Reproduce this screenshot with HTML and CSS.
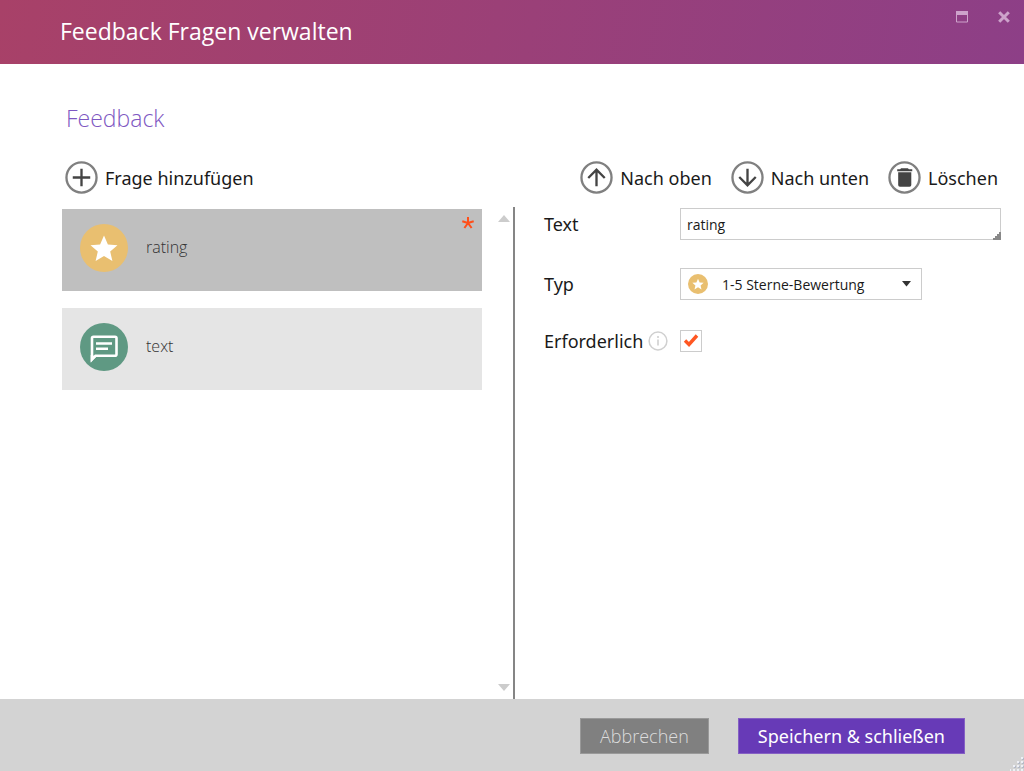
FILE: index.html
```html
<!DOCTYPE html>
<html lang="de">
<head>
<meta charset="utf-8">
<meta name="viewport" content="width=device-width, initial-scale=1">
<title>Feedback Fragen verwalten</title>
<link rel="stylesheet" href="styles.css">
</head>
<body>
<svg class="symbols" aria-hidden="true">
  <symbol id="star" viewBox="0 0 48 48">
    <circle cx="24" cy="24" r="24" fill="#e9bf70"/>
    <path fill="#fff" d="M24 11.5l3.900 8.900 9.600.8-7.300 6.400 2.200 9.400-8.400-5-8.400 5 2.200-9.400-7.300-6.400 9.600-.8z"/>
  </symbol>
</svg>
<header class="titlebar">
  <h1 class="title">Feedback Fragen verwalten</h1>
  <div class="window-controls">
    <button class="window-button" type="button" aria-label="Maximieren">
      <svg width="12" height="12" viewBox="0 0 12 12"><path d="M.5 .5h11v10.500h-11z" fill="none" stroke="currentColor"/><path d="M0 0h12v4H0z" fill="currentColor"/></svg>
    </button>
    <button class="window-button" type="button" aria-label="Schließen">
      <svg width="12" height="12" viewBox="0 0 12 12"><path d="M1.200 1.200l9.600 9.600M10.800 1.200l-9.600 9.600" stroke="currentColor" stroke-width="3"/></svg>
    </button>
  </div>
</header>
<main class="content">
  <h2 class="section-title">Feedback</h2>
  <div class="toolbar">
    <button class="tool" type="button">
      <svg class="tool-icon" viewBox="0 0 34 34"><circle class="ring" cx="17" cy="17" r="15.500"/><path class="stroke" d="M17 8v18M8 17h18"/></svg>
      Frage hinzufügen
    </button>
    <div class="tool-group">
      <button class="tool" type="button">
        <svg class="tool-icon" viewBox="0 0 34 34"><circle class="ring" cx="17" cy="17" r="15.500"/><path class="stroke" d="M17 26V9.500M8.500 17.500L17 9l8.500 8.500"/></svg>
        Nach oben
      </button>
      <button class="tool" type="button">
        <svg class="tool-icon" viewBox="0 0 34 34"><circle class="ring" cx="17" cy="17" r="15.500"/><path class="stroke" d="M17 8v16.500M8.500 16.500L17 25l8.500-8.500"/></svg>
        Nach unten
      </button>
      <button class="tool" type="button">
        <svg class="tool-icon" viewBox="0 0 34 34"><circle class="ring" cx="17" cy="17" r="15.500"/><path fill="#444" d="M13.500 7.500h7l1 1H25v2H9.500v-2h3zM10.500 11.500h13.500v13.200a1.800 1.800 0 0 1-1.800 1.800h-9.900a1.800 1.800 0 0 1-1.800-1.800z"/></svg>
        Löschen
      </button>
    </div>
  </div>
  <div class="split">
    <section class="list-pane">
      <ul class="questions">
        <li class="question question-selected">
          <svg class="question-icon"><use href="#star"/></svg>
          <span class="question-name">rating</span>
          <svg class="required" viewBox="0 0 14 14"><path d="M7 7V1M7 7l5.700-1.800M7 7l3.600 5M7 7l-3.600 5M7 7L1.300 5.200" stroke="#ff4f1a" stroke-width="2"/></svg>
        </li>
        <li class="question">
          <svg class="question-icon" viewBox="0 0 48 48"><circle cx="24" cy="24" r="24" fill="#5f9983"/><path fill="none" stroke="#fff" stroke-width="2.600" d="M12 36.500V15.200a1.500 1.500 0 0 1 1.500-1.500h21.500a1.500 1.500 0 0 1 1.500 1.500v16a1.500 1.500 0 0 1-1.500 1.500H15.500z"/><path fill="#fff" d="M10.700 39v-7l6 1.500z"/><path stroke="#fff" stroke-width="2.400" d="M16 20.500h16M16 25.800h12"/></svg>
          <span class="question-name">text</span>
        </li>
      </ul>
      <div class="scroller">
        <svg width="12" height="7" viewBox="0 0 12 7"><path d="M6 0l6 7H0z" fill="#ccc"/></svg>
        <svg width="12" height="7" viewBox="0 0 12 7"><path d="M0 0h12L6 7z" fill="#ccc"/></svg>
      </div>
    </section>
    <form class="details">
      <label class="label" for="text">Text</label>
      <div class="text-wrap">
        <input class="text-input" id="text" type="text" value="rating">
        <svg class="grip" viewBox="0 0 8 8"><path d="M8 0v8H0V6h2V4h2V2h2V0z" fill="#888"/></svg>
      </div>
      <label class="label" for="type">Typ</label>
      <div class="select-wrap">
        <select class="select" id="type"><option>1-5 Sterne-Bewertung</option></select>
        <svg class="select-icon"><use href="#star"/></svg>
        <svg class="caret" viewBox="0 0 9 6"><path d="M0 0h9L4.500 5.500z" fill="#333"/></svg>
      </div>
      <div class="label">
        <label for="required">Erforderlich</label>
        <svg class="info" viewBox="0 0 20 20"><circle cx="10" cy="10" r="8.900" fill="none" stroke="#d0d0d0" stroke-width="1.500"/><path d="M10 8.500v6M10 5v2" stroke="#d0d0d0" stroke-width="1.600"/></svg>
      </div>
      <div class="check-wrap">
        <input class="checkbox" id="required" type="checkbox" checked>
        <svg class="check" viewBox="0 0 22 22"><path d="M5 10.500l4 4 8-9" fill="none" stroke="#ff5722" stroke-width="3.400"/></svg>
      </div>
    </form>
  </div>
</main>
<footer class="footer">
  <button class="button" type="button">Abbrechen</button>
  <button class="button button-primary" type="button">Speichern &amp; schließen</button>
  <svg class="resize" viewBox="0 0 14 14"><path fill="#eef0f6" d="M11 0h2v2h-2zM11 4h2v2h-2zM7 4h2v2H7zM11 8h2v2h-2zM7 8h2v2H7zM3 8h2v2H3zM11 12h2v2h-2zM7 12h2v2H7zM3 12h2v2H3zM0 12h1v2H0z"/><path fill="#b4bac8" d="M13 1h1v2h-2V2h1zM13 5h1v2h-2V6h1zM9 5h1v2H8V6h1zM13 9h1v2h-2v-1h1zM9 9h1v2H8v-1h1zM5 9h1v2H4v-1h1z"/></svg>
</footer>
</body>
</html>
```
FILE: styles.css
```css
* {
  box-sizing: border-box;
}

body {
  margin: 0;
  min-height: 100vh;
  display: flex;
  flex-direction: column;
  background: #fff;
  color: #1a1a1a;
  font-family: "Segoe UI", "Noto Sans", sans-serif;
  font-size: 18px;
}

button,
input,
select {
  font: inherit;
  color: inherit;
}

.symbols {
  position: absolute;
  width: 0;
  height: 0;
}

.titlebar {
  display: flex;
  justify-content: space-between;
  height: 64px;
  padding-left: 60px;
  background: linear-gradient(100deg, #a84168, #8d3f87);
}

.title {
  margin: 0;
  color: #fff;
  font-family: "Segoe UI", "Open Sans", sans-serif;
  font-size: 23px;
  font-weight: 400;
  line-height: 62px;
}

.window-controls {
  display: flex;
  align-items: flex-start;
  gap: 30px;
  padding: 11px 14px;
}

.window-button {
  display: flex;
  padding: 0;
  border: 0;
  background: none;
  color: #cda3cb;
}

.content {
  flex: 1;
  display: flex;
  flex-direction: column;
  padding: 36px 23px 0 62px;
}

.section-title {
  margin: 0 0 25px 4px;
  color: #7e57c2;
  font-family: "Segoe UI", "Open Sans", sans-serif;
  font-size: 23px;
  font-weight: 300;
  line-height: 36px;
}

.toolbar {
  display: flex;
  justify-content: space-between;
  padding: 0 3px;
}

.tool-group {
  display: flex;
  gap: 19px;
}

.tool {
  display: flex;
  align-items: center;
  gap: 7px;
  padding: 0;
  border: 0;
  background: none;
  line-height: 32px;
  white-space: nowrap;
}

.tool-icon {
  width: 33px;
  height: 33px;
}

.ring {
  fill: none;
  stroke: #808080;
  stroke-width: 2.4;
}

.stroke {
  fill: none;
  stroke: #444;
  stroke-width: 2.4;
}

.split {
  flex: 1;
  display: grid;
  grid-template-columns: minmax(0, 453fr) minmax(0, 486fr);
  margin-top: 13px;
}

.list-pane {
  display: flex;
  border-right: 2px solid #858585;
}

.questions {
  flex: 1;
  display: flex;
  flex-direction: column;
  gap: 17px;
  margin: 0;
  padding: 2px 0 0;
  list-style: none;
}

.question {
  display: flex;
  align-items: flex-start;
  gap: 18px;
  height: 82px;
  padding: 15px 7px 0 18px;
  background: #e5e5e5;
}

.question-selected {
  background: #bfbfbf;
}

.question-icon {
  width: 48px;
  height: 48px;
}

.question-name {
  flex: 1;
  color: #333;
  font-family: "Segoe UI", "Open Sans", sans-serif;
  font-size: 16px;
  font-weight: 300;
  line-height: 46px;
}

.required {
  width: 14px;
  height: 14px;
  margin-top: -8px;
}

.scroller {
  display: flex;
  flex-direction: column;
  justify-content: space-between;
  padding: 8px 3px 8px 16px;
}

.details {
  display: grid;
  grid-template-columns: 136px minmax(0, 1fr);
  align-content: start;
  row-gap: 28px;
  padding: 1px 0 0 29px;
}

.label {
  display: flex;
  align-items: center;
  gap: 5px;
  line-height: 26px;
}

.info {
  width: 20px;
  height: 20px;
}

.text-wrap,
.select-wrap,
.check-wrap {
  position: relative;
  display: flex;
  align-items: center;
}

.select-wrap {
  max-width: 242px;
}

.text-input,
.select {
  width: 100%;
  height: 32px;
  margin: 0;
  padding: 0 6px;
  border: 1px solid #ccc;
  border-radius: 0;
  background: #fff;
  font-family: "Segoe UI", "Open Sans", sans-serif;
  font-size: 14px;
}

.select {
  appearance: none;
  padding-left: 41px;
}

.grip {
  position: absolute;
  right: 0;
  bottom: 0;
  width: 8px;
  height: 8px;
}

.select-icon {
  position: absolute;
  left: 8px;
  width: 20px;
  height: 20px;
  pointer-events: none;
}

.caret {
  position: absolute;
  right: 11px;
  width: 9px;
  height: 6px;
  pointer-events: none;
}

.checkbox {
  appearance: none;
  width: 22px;
  height: 22px;
  margin: 0;
  border: 1px solid #ccc;
  background: #fff;
}

.check {
  position: absolute;
  left: 0;
  width: 22px;
  height: 22px;
  pointer-events: none;
}

.footer {
  position: relative;
  display: flex;
  justify-content: flex-end;
  gap: 29px;
  padding: 19px 59px 17px;
  background: #d3d3d3;
}

.button {
  height: 36px;
  padding: 0 19px;
  border: 1px solid #999;
  background: #808080;
  color: #ddd;
  font-family: "Segoe UI", "Open Sans", sans-serif;
  font-weight: 300;
  line-height: 32px;
}

.button-primary {
  border-color: #8560c4;
  background: #673ab7;
  color: #fff;
  font-family: "Segoe UI", "Noto Sans", sans-serif;
  font-weight: 400;
}

.resize {
  position: absolute;
  right: 0;
  bottom: 0;
  width: 14px;
  height: 14px;
}
```
